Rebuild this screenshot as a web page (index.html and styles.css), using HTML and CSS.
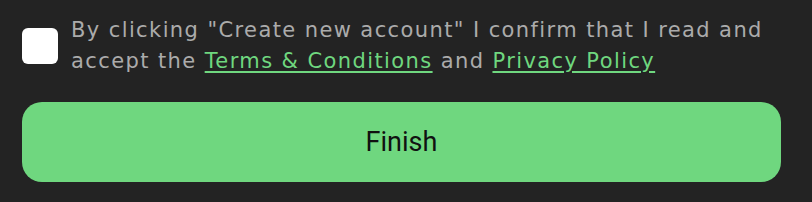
FILE: index.html
```html
<!DOCTYPE html>
<html>
<head>
<meta charset="utf-8">
<link rel="stylesheet" href="styles.css">
</head>
<body>
<div class="form">
  <label class="consent">
    <span class="box"></span>
    <span class="consent-text">By clicking "Create new account" I confirm that I read and accept the <a href="#" class="link">Terms &amp; Conditions</a> and <a href="#" class="link">Privacy Policy</a></span>
  </label>
  <button class="finish">Finish</button>
</div>
</body>
</html>
```
FILE: styles.css
```css
html, body {
  margin: 0;
  padding: 0;
  background: #232323;
}
.form {
  padding: 15px 31px 0 22px;
  display: flex;
  flex-direction: column;
  gap: 25px;
}
.consent {
  display: flex;
  align-items: center;
  gap: 13px;
}
.box {
  flex: none;
  width: 36px;
  height: 36px;
  border-radius: 6px;
  background: #ffffff;
}
.consent-text {
  font-family: "DejaVu Sans", sans-serif;
  font-size: 21px;
  letter-spacing: 1.4px;
  line-height: 31px;
  color: #ababab;
}
.link {
  color: #6fd77f;
  text-decoration: underline;
  text-underline-offset: 3px;
}
.finish {
  height: 80px;
  border: none;
  border-radius: 20px;
  background: #6fd77f;
  color: #111;
  font-family: Roboto, sans-serif;
  font-size: 27px;
}
```
